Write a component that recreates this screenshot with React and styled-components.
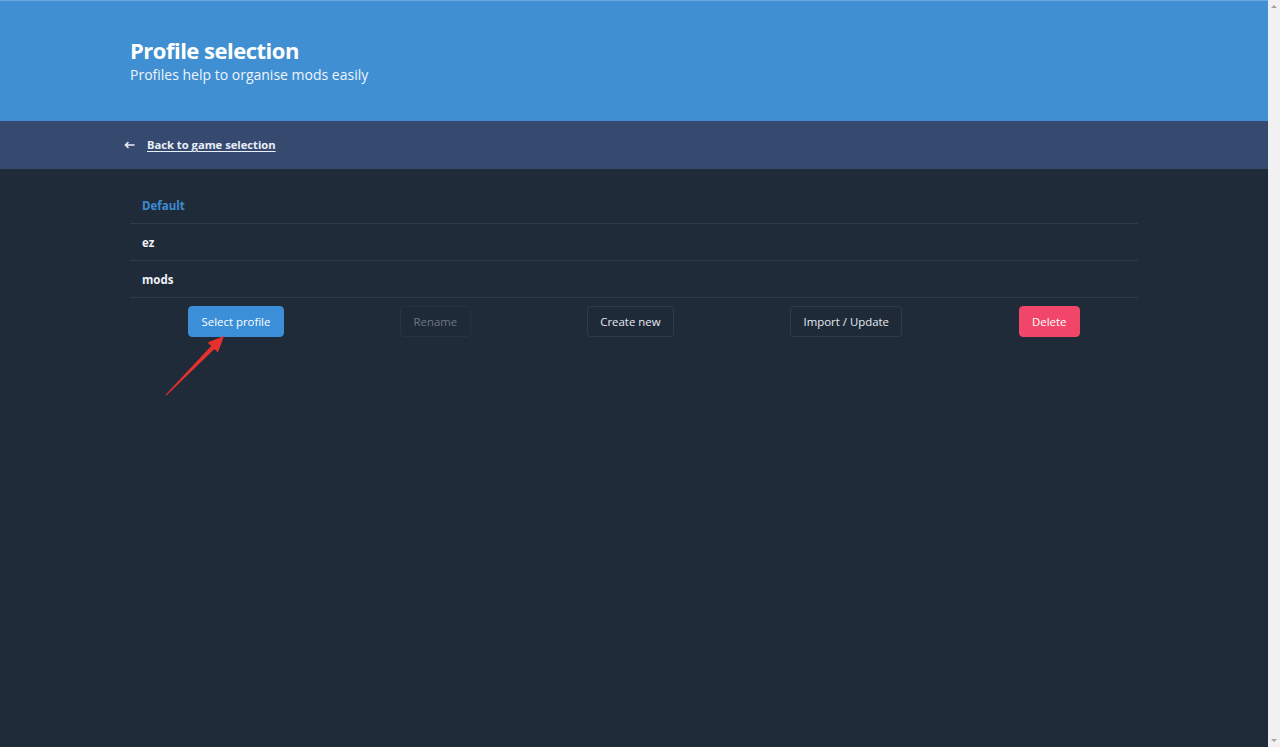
import React from 'react';
import styled, { createGlobalStyle } from 'styled-components';

const profiles = [
  { name: 'Default', active: true },
  { name: 'ez' },
  { name: 'mods' },
];

const App = () => {
  return (
    <>
      <GlobalStyle />
      <Window>
        <Page>
          <Hero>
            <Container>
              <Title>Profile selection</Title>
              <Subtitle>Profiles help to organise mods easily</Subtitle>
            </Container>
          </Hero>
          <NavBar>
            <Container>
              <BackLink href="#">
                <svg width="11" height="8" viewBox="0 0 11 8">
                  <path d="M10.5 4H1.5M4.5 1L1.5 4l3 3" stroke="#e9eef7" strokeWidth="1.6" fill="none" />
                </svg>
                <BackText>Back to game selection</BackText>
              </BackLink>
            </Container>
          </NavBar>
          <Body>
            <Container>
              <ProfileList>
                {profiles.map((p) => (
                  <ProfileRow key={p.name} $active={p.active}>{p.name}</ProfileRow>
                ))}
              </ProfileList>
              <Actions>
                <ActionButton $variant="primary">Select profile</ActionButton>
                <ActionButton disabled>Rename</ActionButton>
                <ActionButton>Create new</ActionButton>
                <ActionButton>Import / Update</ActionButton>
                <ActionButton $variant="danger">Delete</ActionButton>
              </Actions>
            </Container>
            {/* red annotation arrow pointing at the select button */}
            <Annotation width="70" height="70" viewBox="0 0 70 70">
              <polygon
                points="5.6,64.7 51.2,15.9 47.6,12.4 64,6 57.9,22.4 54.4,19.0 6.4,65.4"
                fill="#e8312c"
              />
            </Annotation>
          </Body>
        </Page>
        <Scrollbar>
          <ScrollArrow $dir="up" />
          <ScrollArrow $dir="down" />
        </Scrollbar>
      </Window>
    </>
  );
};

export default App;

const GlobalStyle = createGlobalStyle`
  html, body {
    margin: 0;
    padding: 0;
    height: 100%;
    overflow: hidden;
  }
  body {
    font-family: 'Open Sans', 'Noto Sans', sans-serif;
    background: #202b3a;
  }
  #root {
    height: 100%;
  }
`;

const Window = styled.div`
  display: flex;
  height: 747px;
  width: 1280px;
`;

const Page = styled.div`
  flex: 1;
  display: flex;
  flex-direction: column;
  background: #202b3a;
  min-width: 0;
`;

const Container = styled.div`
  width: 1008px;
  margin: 0 auto;
`;

const Hero = styled.section`
  background: #3f8fd2;
  border-top: 1px solid #6aa9e0;
  height: 121px;
  box-sizing: border-box;
  padding-top: 34px;
  color: #ffffff;
`;

const Title = styled.h1`
  margin: 0;
  font-size: 22px;
  font-weight: 700;
  line-height: 30px;
  letter-spacing: -0.5px;
`;

const Subtitle = styled.p`
  margin: 0;
  font-size: 14px;
  line-height: 20px;
  color: #eef5fc;
`;

const NavBar = styled.nav`
  background: #364a70;
  height: 48px;
  display: flex;
  align-items: center;
`;

const BackLink = styled.a`
  display: flex;
  align-items: center;
  gap: 12px;
  margin-left: -6px;
  height: 16px;
  line-height: 16px;
  color: #e9eef7;
  text-decoration: none;
`;

const BackText = styled.span`
  font-size: 11.2px;
  font-weight: 700;
  text-decoration: underline;
  text-underline-offset: 2px;
`;

const Body = styled.main`
  flex: 1;
  position: relative;
  padding-top: 18px;
`;

const ProfileList = styled.ul`
  list-style: none;
  margin: 0;
  padding: 0;
`;

const ProfileRow = styled.li`
  height: 36px;
  display: flex;
  align-items: center;
  padding: 0 12px;
  border-bottom: 1px solid #2e3b4c;
  font-size: 11.5px;
  font-weight: 700;
  color: ${(p) => (p.$active ? '#3d8bd3' : '#eef2f7')};
`;

const Actions = styled.div`
  display: flex;
  justify-content: space-around;
  padding-top: 8px;
`;

const variants = {
  primary: { bg: '#3b8ed8', border: '#3b8ed8', color: '#ffffff' },
  danger: { bg: '#f1466a', border: '#f1466a', color: '#ffffff' },
  default: { bg: '#1f2a38', border: '#2f3c4e', color: '#e6ebf2' },
};

const ActionButton = styled.button`
  height: 31px;
  padding: 0 12.5px;
  border-radius: 4px;
  font-family: inherit;
  font-size: 11.4px;
  cursor: pointer;
  background: ${(p) => variants[p.$variant || 'default'].bg};
  border: 1px solid ${(p) => variants[p.$variant || 'default'].border};
  color: ${(p) => variants[p.$variant || 'default'].color};

  &:disabled {
    color: #6b7684;
    border-color: #28333f;
    cursor: default;
  }
`;

const Annotation = styled.svg`
  position: absolute;
  left: 160px;
  top: 161px;
  pointer-events: none;
`;

const Scrollbar = styled.div`
  width: 12px;
  background: #f1f1f1;
  display: flex;
  flex-direction: column;
  justify-content: space-between;
  align-items: center;
  padding: 5px 0;
  box-sizing: border-box;
`;

const ScrollArrow = styled.div`
  width: 0;
  height: 0;
  border-left: 3px solid transparent;
  border-right: 3px solid transparent;
  ${(p) =>
    p.$dir === 'up'
      ? 'border-bottom: 3px solid #a3a3a3;'
      : 'border-top: 3px solid #a3a3a3;'}
`;
